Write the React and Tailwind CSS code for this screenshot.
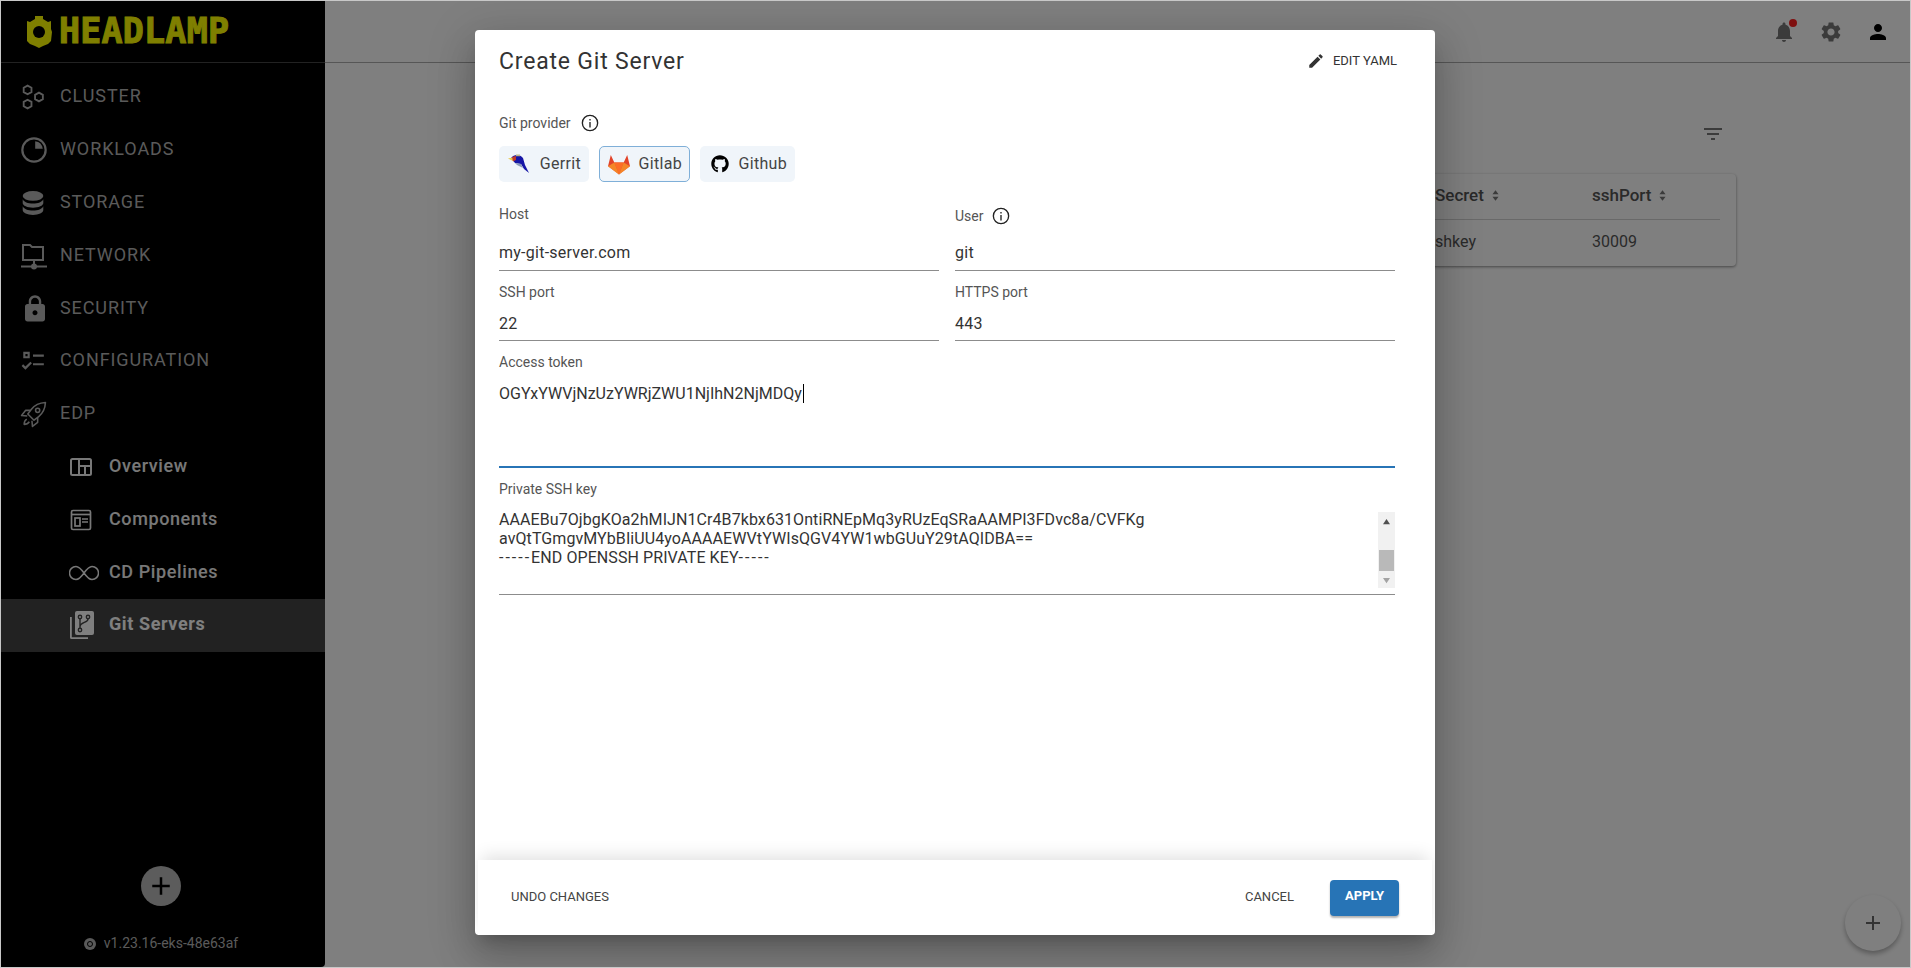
import React from "react";
import { FaGithub } from "react-icons/fa";

const font = { fontFamily: "Roboto, sans-serif" };

const P = ({ d, className = "w-6 h-6" }) => (
  <svg viewBox="0 0 24 24" className={className} fill="currentColor">
    <path d={d} />
  </svg>
);

const ClusterIcon = () => (
  <svg viewBox="0 0 24 24" className="w-[26px] h-[26px]" fill="none" stroke="currentColor" strokeWidth="1.7">
    <path d="M7 1.5l3.600 2v4L7 9.500l-3.600-2v-4z" />
    <path d="M7 14.500l3.600 2v4l-3.600 2-3.600-2v-4z" />
    <path d="M17.500 8l3.600 2v4l-3.600 2-3.600-2v-4z" />
  </svg>
);
const WorkloadsIcon = () => (
  <svg viewBox="0 0 24 24" className="w-[28px] h-[28px]" fill="none" stroke="currentColor" strokeWidth="1.900">
    <circle cx="12" cy="12" r="10" />
    <path d="M13 4.500a7.500 7.500 0 0 1 6.500 6.500H13z" fill="currentColor" stroke="none" />
  </svg>
);
const StorageIcon = () => (
  <svg viewBox="0 0 24 24" className="w-[26px] h-[26px]" fill="currentColor">
    <ellipse cx="12" cy="5.500" rx="9.500" ry="4.500" />
    <path d="M2.500 8.500c1 2.600 4.800 4 9.500 4s8.500-1.400 9.500-4v3.500c0 2.500-4.200 4.300-9.500 4.300S2.500 14.500 2.500 12z" />
    <path d="M2.500 15c1 2.600 4.800 4 9.500 4s8.500-1.400 9.500-4v3.500c0 2.500-4.200 4.500-9.500 4.500s-9.500-2-9.500-4.500z" />
  </svg>
);
const NetworkIcon = () => (
  <svg viewBox="0 0 28 28" className="w-[28px] h-[28px]" fill="none" stroke="currentColor" strokeWidth="2">
    <path d="M3 18V3h7l2 2h11v13z" />
    <path d="M14 18v5M1 24.500h26" />
    <circle cx="14" cy="24.500" r="2" fill="currentColor" />
  </svg>
);
const ConfigIcon = () => (
  <P
    className="w-[26px] h-[26px]"
    d="M3 3.500H9V9.500H3V3.500M5 5.500V7.500H7V5.500H5M12 6H22V8H12V6M12 14H22V16H12V14M5 20L1.500 16.500L2.910 15.090L5 17.170L9.590 12.590L11 14L5 20Z"
  />
);
const RocketIcon = () => (
  <svg viewBox="0 0 26 26" className="w-[27px] h-[27px]" fill="none" stroke="currentColor" strokeWidth="1.500" strokeLinejoin="round">
    <path d="M24.500 1.500c-5.500.300-10 2-13.500 6.500l-3.500 4.500 6 6 4.500-3.500c4.500-3.500 6.200-8 6.500-13.500z" />
    <circle cx="17" cy="9" r="2" />
    <path d="M10 9H5.500L1.500 14l5.500.500M17 16v4.500L12 24.500l-.500-5.500" />
    <path d="M6.500 17.500c-1.500.800-2.500 2.500-2.500 5 2.500 0 4-1 5-2.500" />
  </svg>
);
const OverviewIcon = () => (
  <svg viewBox="0 0 24 24" className="w-[24px] h-[24px]" fill="none" stroke="currentColor" strokeWidth="2">
    <rect x="2" y="4" width="20" height="16" rx="1.500" />
    <path d="M10 4v16M10 11h12M16 11v9" />
  </svg>
);
const ComponentsIcon = () => (
  <svg viewBox="0 0 24 24" className="w-[24px] h-[24px]" fill="none" stroke="currentColor" strokeWidth="1.700">
    <rect x="2.500" y="2.500" width="19" height="19" rx="1.500" />
    <path d="M2.500 6.500h19" />
    <rect x="6" y="10" width="5" height="8" />
    <path d="M13 11h6M13 14h6" />
  </svg>
);
const InfinityIcon = () => (
  <svg viewBox="0 0 30 18" className="w-[30px] h-[18px]" fill="none" stroke="currentColor" strokeWidth="1.500">
    <path d="M15 9c-2.500-3.500-5-6.500-8-6.500a6.500 6.500 0 0 0 0 13c3 0 5.500-3 8-6.500s5-6.500 8-6.500a6.500 6.500 0 0 1 0 13c-3 0-5.500-3-8-6.500z" />
  </svg>
);
const GitServersIcon = () => (
  <svg viewBox="0 0 26 30" className="w-[26px] h-[30px]">
    <path d="M1 7v20.500A1.500 1.500 0 0 0 2.500 29H19v-1.800H2.800V7z" fill="currentColor" />
    <rect x="6" y="1" width="19" height="24" rx="2" fill="currentColor" />
    <g fill="none" stroke="#444" strokeWidth="1.400">
      <circle cx="11" cy="7" r="1.700" />
      <circle cx="11" cy="20" r="1.700" />
      <circle cx="19" cy="7" r="1.700" />
      <path d="M11 9v9M19 9c0 4-8 3-8 8" />
    </g>
  </svg>
);

const mainNav = [
  ["CLUSTER", <ClusterIcon />],
  ["WORKLOADS", <WorkloadsIcon />],
  ["STORAGE", <StorageIcon />],
  ["NETWORK", <NetworkIcon />],
  [
    "SECURITY",
    <P
      className="w-[30px] h-[30px]"
      d="M18 8h-1V6c0-2.760-2.240-5-5-5S7 3.240 7 6v2H6c-1.100 0-2 .900-2 2v10c0 1.100.900 2 2 2h12c1.100 0 2-.900 2-2V10c0-1.100-.900-2-2-2zm-6 9c-1.100 0-2-.900-2-2s.900-2 2-2 2 .900 2 2-.900 2-2 2zm3.100-9H8.900V6c0-1.710 1.390-3.100 3.100-3.100 1.710 0 3.100 1.390 3.100 3.100v2z"
    />,
  ],
  ["CONFIGURATION", <ConfigIcon />],
  ["EDP", <RocketIcon />],
];

const subNav = [
  ["Overview", <OverviewIcon />],
  ["Components", <ComponentsIcon />],
  ["CD Pipelines", <InfinityIcon />],
];

const Sidebar = () => (
  <aside className="w-[324px] shrink-0 bg-black rounded-br flex flex-col">
    <div className="h-[62px] border-b border-[#444] flex items-center pl-[25px] gap-[7px] shrink-0">
      <svg viewBox="0 0 26 32" className="w-[26px] h-[32px] text-[#ffff00]">
        <path
          d="M9 0h8v3l5 3 3-1v8l1 3-1 9-3 3-5 2-4 2-4-2-5-2-3-3 0-9 0-3V5l3 1 5-3z"
          fill="currentColor"
          fillRule="evenodd"
        />
        <circle cx="13" cy="16" r="6" fill="#000" />
      </svg>
      <span
        className="text-[35px] leading-none font-bold text-[#ffff00] tracking-[0.2px] [-webkit-text-stroke:1px_#ffff00]"
        style={{ fontFamily: "'DejaVu Sans Mono', monospace" }}
      >
        HEADLAMP
      </span>
    </div>

    <nav className="flex flex-col mt-[8px]">
      {mainNav.map(([label, icon]) => (
        <div key={label} className="h-[52.800px] flex items-center text-[#b4b4b4]">
          <div className="w-[59px] pl-[19px] flex justify-start">{icon}</div>
          <span className="text-[18px] tracking-[0.9px] -mt-[3px]">{label}</span>
        </div>
      ))}
      {subNav.map(([label, icon]) => (
        <div key={label} className="h-[52.800px] flex items-center text-[#f0f0f0]">
          <div className="w-[108px] pl-[68px] flex justify-start">{icon}</div>
          <span className="text-[18px] font-medium tracking-[0.6px] -mt-[3px]">{label}</span>
        </div>
      ))}
      <div className="h-[53px] flex items-center bg-[#444] text-white">
        <div className="w-[108px] pl-[68px] flex justify-start">
          <GitServersIcon />
        </div>
        <span className="text-[18px] font-bold tracking-[0.6px] -mt-[3px]">Git Servers</span>
      </div>
    </nav>

    <div className="mt-auto flex flex-col items-center pb-[13px] pr-[4px]">
      <div className="w-[40px] h-[40px] rounded-full bg-[#b8b8b8] flex items-center justify-center text-black">
        <P className="w-[30px] h-[30px]" d="M19 13h-6v6h-2v-6H5v-2h6V5h2v6h6v2z" />
      </div>
      <div className="mt-[27px] flex items-center gap-[8px] text-[14px] text-[#b4b4b4]">
        <svg viewBox="0 0 12 12" className="w-[12px] h-[12px]">
          <circle cx="6" cy="6" r="6" fill="#b4b4b4" />
          <circle cx="6" cy="6" r="2.500" fill="none" stroke="#000" strokeWidth="1" />
        </svg>
        v1.23.16-eks-48e63af
      </div>
    </div>
  </aside>
);

const SortArrows = () => (
  <svg viewBox="0 0 8 12" className="w-[7px] h-[11px] text-[#777]" fill="currentColor">
    <path d="M4 0l3.500 4.500h-7zM4 12L.5 7.500h7z" />
  </svg>
);

const Background = () => (
  <div className="flex-1 min-w-0 flex flex-col">
    <header className="h-[62px] border-b border-[#acacac] flex items-center justify-end pr-[20px] gap-[23px] shrink-0">
      <div className="relative text-[#767676]">
        <P d="M12 22c1.100 0 2-.900 2-2h-4c0 1.100.890 2 2 2zm6-6v-5c0-3.070-1.640-5.640-4.500-6.320V4c0-.830-.670-1.500-1.500-1.500s-1.500.670-1.500 1.500v.680C7.630 5.360 6 7.920 6 11v5l-2 2v1h16v-1l-2-2z" />
        <span className="absolute -top-[1px] right-[-1px] w-[8px] h-[8px] rounded-full bg-[#ff2020]" />
      </div>
      <div className="text-[#767676]">
        <P d="M19.140 12.940c.040-.300.060-.610.060-.940 0-.320-.020-.640-.070-.940l2.030-1.580c.180-.140.230-.410.120-.610l-1.920-3.320c-.120-.220-.370-.290-.590-.220l-2.390.960c-.500-.380-1.030-.700-1.620-.940l-.360-2.540c-.040-.240-.240-.410-.480-.410h-3.840c-.240 0-.430.170-.470.410l-.360 2.540c-.590.240-1.130.570-1.620.940l-2.390-.960c-.220-.080-.470 0-.590.220L2.740 8.870c-.120.210-.080.470.120.610l2.030 1.580c-.050.300-.090.630-.090.940s.020.640.070.940l-2.030 1.580c-.180.140-.230.410-.120.610l1.920 3.320c.120.220.370.290.590.220l2.390-.960c.500.380 1.030.700 1.620.940l.360 2.540c.050.240.240.410.480.410h3.840c.240 0 .440-.170.470-.410l.360-2.540c.590-.240 1.130-.560 1.620-.940l2.390.960c.220.080.470 0 .590-.220l1.920-3.320c.120-.220.070-.470-.120-.610l-2.010-1.580zM12 15.600c-1.980 0-3.600-1.620-3.600-3.600s1.620-3.600 3.600-3.600 3.600 1.620 3.600 3.600-1.620 3.600-3.600 3.600z" />
      </div>
      <div className="text-black">
        <P d="M12 12c2.210 0 4-1.790 4-4s-1.790-4-4-4-4 1.790-4 4 1.790 4 4 4zm0 2c-2.670 0-8 1.340-8 4v2h16v-2c0-2.660-5.330-4-8-4z" />
      </div>
    </header>
    <div className="flex-1 flex flex-col items-end pr-[174px]">
      <div className="mt-[59px] mr-[11px] text-[#767676]">
        <P d="M10 18h4v-2h-4v2zM3 6v2h18V6H3zm3 7h12v-2H6v2z" />
      </div>
      <div className="mt-[28px] w-[600px] h-[92px] rounded bg-white shadow-[0_1px_3px_rgba(0,0,0,0.45)] px-[16px] text-[16px] text-[#555]">
        <div className="h-[46px] border-b border-[#d2d2d2] flex items-end pb-[11px] font-medium text-[#555] text-[17px]">
          <div className="w-[283px] text-right whitespace-nowrap">provider</div>
          <div className="w-[157px] flex items-center gap-[8px]">
            Secret <SortArrows />
          </div>
          <div className="flex items-center gap-[8px]">
            sshPort <SortArrows />
          </div>
        </div>
        <div className="h-[45px] flex items-center pb-[2px]">
          <div className="w-[283px] text-right whitespace-nowrap">gitlab-s</div>
          <div className="w-[157px]">shkey</div>
          <div>30009</div>
        </div>
      </div>
    </div>
    {/* floating add button */}
    <div className="absolute right-[9px] bottom-[16px] w-[56px] h-[56px] rounded-full bg-white shadow-[0_3px_5px_rgba(0,0,0,0.3)] flex items-center justify-center text-[#666]">
      <P d="M19 13h-6v6h-2v-6H5v-2h6V5h2v6h6v2z" />
    </div>
  </div>
);

const Field = ({ label, value, info, gap, labelTop = 0, pb = 4 }) => (
  <div className="flex-1 flex flex-col">
    <div className="flex items-center gap-[9px] text-[14px] text-[#555] h-[20px]" style={{ marginTop: labelTop }}>
      {label}
      {info}
    </div>
    <div
      className="text-[16px] text-[#333] tracking-[0.25px] border-b border-[#8c8c8c] leading-[26px]"
      style={{ marginTop: gap, paddingBottom: pb }}
    >
      {value}
    </div>
  </div>
);

const InfoIcon = () => (
  <svg viewBox="0 0 20 20" className="w-[18px] h-[18px] text-[#222]" fill="none" stroke="currentColor" strokeWidth="1.500">
    <circle cx="10" cy="10" r="8.500" />
    <path d="M10 9v6M10 5.500v1.800" />
  </svg>
);

const GerritLogo = () => (
  <svg viewBox="0 0 22 22" className="w-[22px] h-[22px]">
    <path d="M3 5C6 1 12 1 15 5l2 7 4 8-5-4-3-5-6-1z" fill="#1616a6" />
    <path d="M0 5.500L5 4.500 5 8z" fill="#e8c84a" />
    <path d="M4 4l4-1 0 4-3 1.500z" fill="#c0392b" />
    <path d="M8 1.500h4v1.800H8z" fill="#b9b58a" />
    <path d="M7 10l6 1 2 4-6-3z" fill="#8a9ab8" />
  </svg>
);

const GitlabLogo = () => (
  <svg viewBox="0 0 24 24" className="w-[24px] h-[24px]">
    <path d="M12 22.500L1 14.300 3.800 3l3.500 7.500h9.400L20.200 3 23 14.300z" fill="#e24329" />
    <path d="M12 22.500l4.700-12H7.300z" fill="#fc6d26" />
    <path d="M12 22.500L1 14.300l6.300-3.800z" fill="#fca326" opacity="0.700" />
    <path d="M12 22.500l11-8.200-6.300-3.800z" fill="#fca326" opacity="0.700" />
  </svg>
);

const ProviderChip = ({ label, logo, active, className = "" }) => (
  <div
    className={`h-[36px] rounded-[5px] bg-[#f0f5fa] flex items-center justify-between pl-[7px] pr-[7px] text-[16px] text-[#444] tracking-[0.3px] border ${
      active ? "border-[#7fafd8]" : "border-transparent"
    } ${className}`}
  >
    <span className="flex items-center justify-center w-[24px]">{logo}</span>
    {label}
  </div>
);

const Scrollbar = () => (
  <div className="w-[17px] shrink-0 bg-[#f1f1f1] flex flex-col items-center text-[#505050]">
    <svg viewBox="0 0 8 8" className="w-[7px] h-[7px] mt-[6px]" fill="currentColor">
      <path d="M4 1l4 6H0z" />
    </svg>
    <div className="w-[15px] h-[21px] bg-[#b9b9b9] mt-[25px]" />
    <svg viewBox="0 0 8 8" className="w-[7px] h-[7px] mt-[6px] text-[#a3a3a3]" fill="currentColor">
      <path d="M4 7l4-6H0z" />
    </svg>
  </div>
);

const CreateDialog = () => (
  <div className="absolute inset-0 bg-black/50 flex justify-start pl-[474px] pt-[29px] pb-[32px]">
    <div className="w-[960px] bg-white rounded shadow-[0_11px_15px_-7px_rgba(0,0,0,0.2),0_24px_38px_3px_rgba(0,0,0,0.14),0_9px_46px_8px_rgba(0,0,0,0.12)] flex flex-col overflow-hidden">
      <div className="h-[62px] pl-[24px] pr-[38px] flex items-center justify-between shrink-0">
        <h2 className="text-[23px] text-[#333] tracking-[0.8px] mt-[2px]">Create Git Server</h2>
        <div className="flex items-center gap-[8px] text-[13px] text-[#333]">
          <P className="w-[18px] h-[18px]" d="M3 17.250V21h3.750L17.810 9.940l-3.750-3.750L3 17.250zM20.710 7.040c.390-.390.390-1.020 0-1.410l-2.340-2.340a.9959.9959 0 0 0-1.410 0l-1.830 1.830 3.750 3.750 1.830-1.830z" />
          EDIT YAML
        </div>
      </div>

      <div className="flex-1 min-h-0 pl-[24px] pr-[40px] flex flex-col">
        <div className="mt-[21px] flex items-center gap-[10px] text-[14px] text-[#555] h-[20px]">
          Git provider <InfoIcon />
        </div>
        <div className="mt-[13px] flex gap-[10px]">
          <ProviderChip label="Gerrit" logo={<GerritLogo />} className="w-[90px]" />
          <ProviderChip label="Gitlab" logo={<GitlabLogo />} active className="w-[91px]" />
          <ProviderChip label="Github" logo={<FaGithub className="w-[18px] h-[18px] text-black" />} className="w-[95px]" />
        </div>

        <div className="mt-[22px] flex gap-[16px]">
          <Field label="Host" value="my-git-server.com" gap={16} />
          <Field label="User" value="git" info={<InfoIcon />} gap={14} labelTop={2} />
        </div>
        <div className="mt-[11px] flex gap-[16px]">
          <Field label="SSH port" value="22" gap={9} pb={3} />
          <Field label="HTTPS port" value="443" gap={9} pb={3} />
        </div>

        <div className="mt-[11px] flex flex-col">
          <div className="text-[14px] text-[#555] h-[20px] flex items-center">Access token</div>
          <div className="text-[16px] text-[#333] border-b-2 border-[#2774b6] mt-[6px] h-[90px] leading-[26px] pt-[3px]">
            OGYxYWVjNzUzYWRjZWU1NjIhN2NjMDQy<span className="border-l border-black ml-[1px]" />
          </div>
        </div>

        <div className="mt-[11px] flex flex-col">
          <div className="text-[14px] text-[#555] h-[20px] flex items-center">Private SSH key</div>
          <div className="mt-[13px] flex h-[76px]">
            <div className="flex-1 text-[16px] text-[#333] leading-[19px] -mt-[2px] tracking-[0.08px] whitespace-pre">
              {"AAAEBu7OjbgKOa2hMIJN1Cr4B7kbx631OntiRNEpMq3yRUzEqSRaAAMPI3FDvc8a/CVFKg\navQtTGmgvMYbBIiUU4yoAAAAEWVtYWIsQGV4YW1wbGUuY29tAQIDBA==\n"}
              <span className="tracking-[2px]">-----</span>END OPENSSH PRIVATE KEY<span className="tracking-[2px]">-----</span>
            </div>
            <Scrollbar />
          </div>
          <div className="mt-[6px] border-b border-[#8c8c8c]" />
        </div>
      </div>

      <div className="h-[75px] shrink-0 bg-white flex items-center justify-between pl-[33px] pr-[33px] text-[13px] text-[#444] shadow-[0_-8px_16px_-4px_rgba(0,0,0,0.12)] mx-[3px]">
        <span className="-mt-[2px]">UNDO CHANGES</span>
        <div className="flex items-center gap-[36px]">
          <span className="-mt-[2px]">CANCEL</span>
          <div className="w-[69px] h-[36px] rounded bg-[#2774b6] text-white font-bold flex items-center justify-center pb-[3px] shadow-[0_2px_2px_rgba(0,0,0,0.3)]">
            APPLY
          </div>
        </div>
      </div>
    </div>
  </div>
);

export default function App() {
  return (
    <div className="relative h-screen w-screen overflow-hidden bg-white border border-[#c8c8c8] flex" style={font}>
      <Sidebar />
      <Background />
      <CreateDialog />
    </div>
  );
}
